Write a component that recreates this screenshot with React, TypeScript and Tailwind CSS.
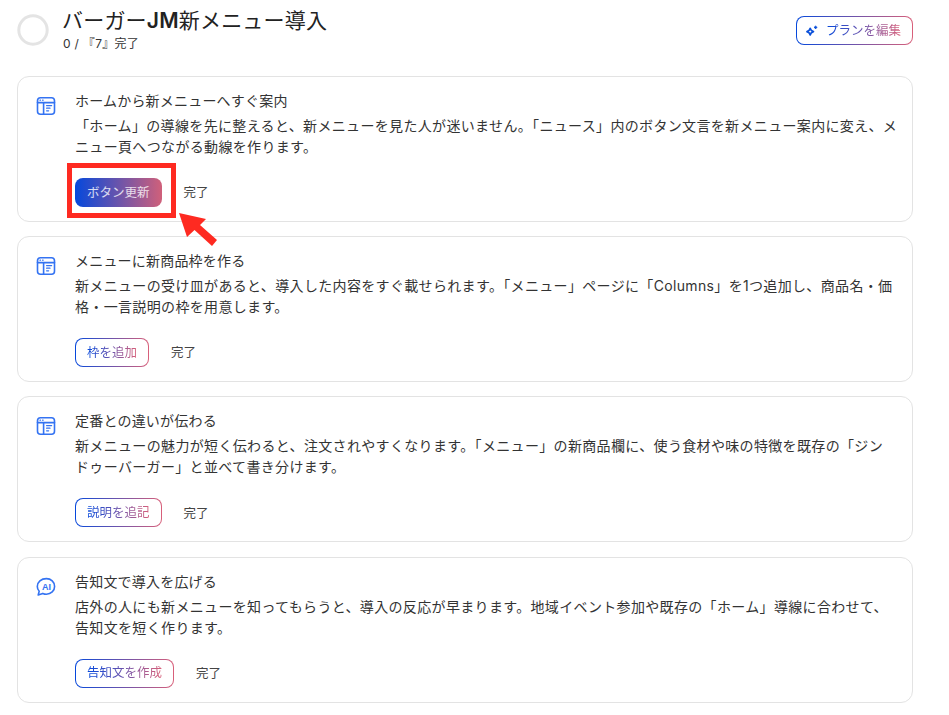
import type { ReactNode } from "react";

const outlineBtn =
  "rounded-lg border border-transparent [background:linear-gradient(#fff,#fff)_padding-box,linear-gradient(90deg,#0548dc,#d9607a)_border-box]";
const gradText = "bg-[linear-gradient(90deg,#0548dc,#d9607a)] bg-clip-text text-transparent";

function WindowIcon() {
  return (
    <svg viewBox="0 0 20 20" className="h-[20px] w-[20px]" fill="none" stroke="#3473f2" strokeWidth="1.6" strokeLinecap="round" aria-hidden="true">
      <rect x="1.5" y="1.8" width="17" height="16.4" rx="3" />
      <path d="M1.5 6.6h17M7.6 6.6v11.6" />
      <path d="M4 4.2h.5M6.6 4.2h.5" strokeWidth="1.3" />
      <path d="M10.6 9.6h5M10.6 12.2h3.4M10.6 14.8h2" strokeWidth="1.3" />
    </svg>
  );
}

function AiIcon() {
  return (
    <svg viewBox="0 0 20 20" className="h-[20px] w-[20px]" fill="none" stroke="#3473f2" strokeWidth="1.6" strokeLinejoin="round" aria-hidden="true">
      <path d="M10.4 1.6c4.6 0 8.2 3.4 8.2 7.8s-3.6 7.8-8.2 7.8c-1.3 0-2.5-.3-3.6-.8l-4.6 1.5 1-3.7c-1.2-1.3-1.9-3-1.9-4.8 0-4.4 3.9-7.8 9.1-7.8Z" />
      <text x="10.4" y="12.8" textAnchor="middle" fontSize="9" fontWeight="700" fill="#3473f2" stroke="none" fontFamily="'Liberation Sans', sans-serif">AI</text>
    </svg>
  );
}

function Sparkle() {
  return (
    <svg viewBox="0 0 13 13" className="h-[13px] w-[13px]" fill="none" stroke="#0b50da" strokeWidth="1.6" strokeLinejoin="round" aria-hidden="true">
      <path d="M5.2 3.2c.4 2 1.2 2.9 3.3 3.4-2.1.5-2.9 1.4-3.3 3.4-.4-2-1.2-2.9-3.3-3.4 2.1-.5 2.9-1.4 3.3-3.4Z" />
      <path d="M10.6.8c.2.9.6 1.3 1.6 1.6-1 .2-1.4.6-1.6 1.6-.2-1-.6-1.4-1.6-1.6 1-.3 1.4-.7 1.6-1.6Z" fill="#0b50da" strokeWidth="0.8" />
    </svg>
  );
}

function Annotation() {
  return (
    <>
      <div className="absolute left-[-8px] top-[-15px] h-[55px] w-[109px] border-[5px] border-[#fe2a21]" />
      <svg viewBox="0 0 40 36" className="absolute left-[104px] top-[35px] h-[36px] w-[40px]" aria-hidden="true">
        <path d="M0 0 L27 6 L21 12 L38 27 L33 33 L15.5 17 L8 24 Z" fill="#fe2a21" />
      </svg>
    </>
  );
}

function Card({ icon, title, lines, action, solid }: { icon: ReactNode; title: string; lines: string[]; action: string; solid?: boolean }) {
  return (
    <section className="flex h-[146px] gap-[8px] rounded-xl border border-[#e3e3e3] bg-white pl-[18px] pr-[16px] pt-[13px]">
      <div className="w-[20px] shrink-0 pt-[6px]">{icon}</div>
      <div className="ml-[2px] min-w-0 flex-1 pl-[9px]">
        <h2 className="text-[14px] leading-[21px] tracking-[0.2px] text-[#333]">{title}</h2>
        <div className="mt-[4px] text-[14px] leading-[21px] tracking-[0.34px] text-[#333]">
          {lines.map((l) => (
            <p key={l} className="whitespace-nowrap">{l}</p>
          ))}
        </div>
        <div className="relative mt-[21px] flex items-center gap-[9px]">
          {solid ? (
            <button className="flex h-[29px] items-center rounded-lg bg-[linear-gradient(90deg,#0548dc,#d0607a)] px-[12px] pt-[1px] text-[12.5px] text-white/80">
              {action}
            </button>
          ) : (
            <button className={`flex h-[29px] items-center px-[11px] pt-[1px] text-[12.5px] ${outlineBtn}`}>
              <span className={gradText}>{action}</span>
            </button>
          )}
          <button className="px-[13px] pt-[2px] text-[12.5px] text-[#444]">完了</button>
          {solid && <Annotation />}
        </div>
      </div>
    </section>
  );
}

export default function App() {
  return (
    <div className="h-[715px] w-[949px] overflow-hidden bg-white pl-[17px] pr-[36px] font-['Inter','Noto_Sans_CJK_JP',sans-serif]">
      <header className="flex h-[76px] items-start">
        <svg viewBox="0 0 32 32" className="mt-[14px] h-[32px] w-[32px] shrink-0" aria-hidden="true">
          <circle cx="16" cy="16" r="14.2" fill="none" stroke="#e4e4e4" strokeWidth="3" />
        </svg>
        <div className="ml-[14px] flex-1 pt-[6px]">
          <h1 className="-ml-[1px] text-[21px] leading-[29px] tracking-[0.2px] text-[#222]">
            バーガー<span className="font-semibold">JM</span>新メニュー導入
          </h1>
          <p className="mt-[1px] text-[12px] leading-[16px] tracking-[0.3px] text-[#333]">0 / 『7』完了</p>
        </div>
        <button className={`mt-[16px] flex h-[29px] items-center gap-[8px] pl-[8px] pr-[11px] pt-[1px] text-[12.5px] ${outlineBtn}`}>
          <Sparkle />
          <span className={gradText}>プランを編集</span>
        </button>
      </header>
      <main className="flex flex-col gap-[14.2px]">
        <Card
          icon={<WindowIcon />}
          title="ホームから新メニューへすぐ案内"
          lines={[
            "「ホーム」の導線を先に整えると、新メニューを見た人が迷いません。「ニュース」内のボタン文言を新メニュー案内に変え、メ",
            "ニュー頁へつながる動線を作ります。",
          ]}
          action="ボタン更新"
          solid
        />
        <Card
          icon={<WindowIcon />}
          title="メニューに新商品枠を作る"
          lines={[
            "新メニューの受け皿があると、導入した内容をすぐ載せられます。「メニュー」ページに「Columns」を1つ追加し、商品名・価",
            "格・一言説明の枠を用意します。",
          ]}
          action="枠を追加"
        />
        <Card
          icon={<WindowIcon />}
          title="定番との違いが伝わる"
          lines={[
            "新メニューの魅力が短く伝わると、注文されやすくなります。「メニュー」の新商品欄に、使う食材や味の特徴を既存の「ジン",
            "ドゥーバーガー」と並べて書き分けます。",
          ]}
          action="説明を追記"
        />
        <Card
          icon={<AiIcon />}
          title="告知文で導入を広げる"
          lines={[
            "店外の人にも新メニューを知ってもらうと、導入の反応が早まります。地域イベント参加や既存の「ホーム」導線に合わせて、",
            "告知文を短く作ります。",
          ]}
          action="告知文を作成"
        />
      </main>
    </div>
  );
}
